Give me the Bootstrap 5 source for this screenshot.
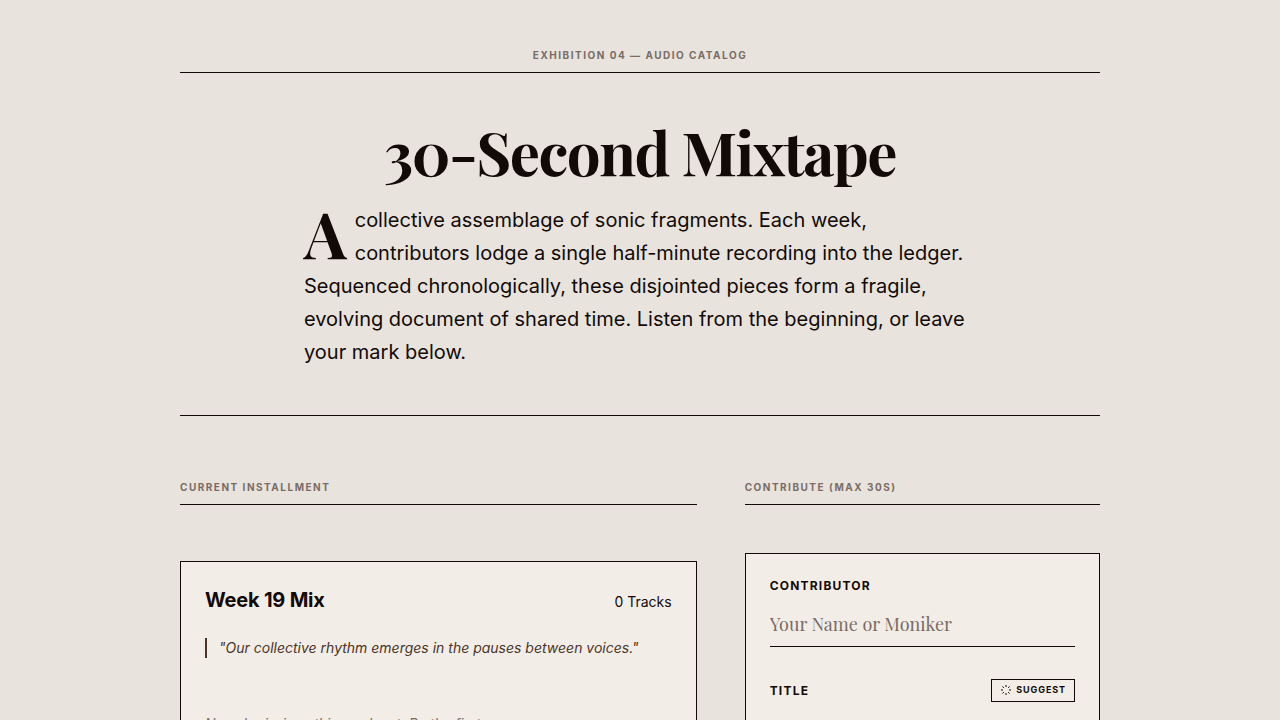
<!DOCTYPE html>
<html lang="en">
<head>
<meta charset="utf-8">
<meta name="viewport" content="width=device-width, initial-scale=1">
<title>30-Second Mixtape</title>
<link href="https://cdn.jsdelivr.net/npm/bootstrap@5.3.0/dist/css/bootstrap.min.css" rel="stylesheet">
<style>
:root{--paper:#e8e3dd;--sheet:#f2ede7;--ink:#120a06;--muted:#7a6c65;--brown:#4a3528;--serif:"Playfair Display","Liberation Serif",serif}
body{background:var(--paper);color:var(--ink);font-family:Inter,"Liberation Sans",sans-serif;font-size:16px;line-height:24px}
.page{max-width:968px}
.rule{border-bottom:1px solid var(--ink)}
.eyebrow{font-size:10px;line-height:14px;font-weight:700;letter-spacing:.15em;text-transform:uppercase;color:var(--muted);padding-bottom:10px}
.masthead{padding-bottom:46px}
.title{font-family:var(--serif);font-weight:700;font-size:60px;line-height:60px;letter-spacing:-.025em;margin-bottom:23px}
.intro{max-width:672px;font-size:20px;line-height:33px}
.intro::first-letter{font-family:var(--serif);font-weight:700;font-size:64px;line-height:58px;float:left;padding-right:8px}
.sheet{background:var(--sheet);border:1px solid var(--ink)}
.sheet h2{font-size:20px;line-height:28px;font-weight:700;letter-spacing:-.01em}
.note{font-size:14px;line-height:20px}
.quote{border-left:2px solid var(--brown);color:var(--brown);padding-left:12px}
.empty-note{color:var(--muted)}
.field-label{font-size:12px;line-height:16px;font-weight:700;letter-spacing:.1em;text-transform:uppercase}
.line-input{font-family:var(--serif);font-size:18px;line-height:28px;color:var(--ink);background:none;border:0;border-bottom:1px solid var(--ink);border-radius:0;padding:8px 0}
.line-input::placeholder{color:var(--muted)}
.suggest{font-size:9px;line-height:14px;font-weight:700;letter-spacing:.1em;text-transform:uppercase;color:var(--ink);border:1px solid var(--ink);border-radius:0;padding:3px 8px 4px}
</style>
</head>
<body>
<div class="container-fluid page px-4">
  <header>
    <p class="eyebrow rule text-center mb-0 pt-5">Exhibition 04 — Audio Catalog</p>
    <div class="masthead rule pt-5 text-center">
      <h1 class="title">30-Second Mixtape</h1>
      <p class="intro text-start mx-auto mb-0">A collective assemblage of sonic fragments. Each week, contributors lodge a single half-minute recording into the ledger. Sequenced chronologically, these disjointed pieces form a fragile, evolving document of shared time. Listen from the beginning, or leave your mark below.</p>
    </div>
  </header>
  <main class="row gx-5 pt-5">
    <section class="col-7">
      <p class="eyebrow rule pt-3 mb-5">Current Installment</p>
      <div class="pt-2">
        <article class="sheet p-4">
          <div class="d-flex justify-content-between align-items-baseline mb-4">
            <h2 class="mb-0">Week 19 Mix</h2>
            <span class="note">0 Tracks</span>
          </div>
          <p class="note quote fst-italic mb-5">"Our collective rhythm emerges in the pauses between voices."</p>
          <p class="note empty-note fst-italic mb-0 pt-2">No submissions this week yet. Be the first.</p>
        </article>
      </div>
    </section>
    <section class="col-5">
      <p class="eyebrow rule pt-3 mb-5">Contribute (Max 30s)</p>
      <form class="sheet p-4">
        <label class="field-label d-block mb-2" for="contributor">Contributor</label>
        <input class="line-input form-control mb-4" id="contributor" type="text" placeholder="Your Name or Moniker">
        <div class="d-flex justify-content-between align-items-center pt-2">
          <label class="field-label" for="track-title">Title</label>
          <button class="suggest btn d-inline-flex align-items-center gap-1" type="button">
            <svg width="12" height="12" viewBox="0 0 24 24" fill="none" stroke="currentColor" stroke-width="2" aria-hidden="true"><path d="M12 2v4M12 18v4M2 12h4M18 12h4M4.9 4.9l2.9 2.9M16.2 16.2l2.9 2.9M4.9 19.1l2.9-2.9M16.2 7.8l2.9-2.9"/></svg>
            Suggest
          </button>
        </div>
        <input class="line-input form-control" id="track-title" type="text">
      </form>
    </section>
  </main>
</div>
<script src="https://cdn.jsdelivr.net/npm/bootstrap@5.3.0/dist/js/bootstrap.bundle.min.js"></script>
</body>
</html>
